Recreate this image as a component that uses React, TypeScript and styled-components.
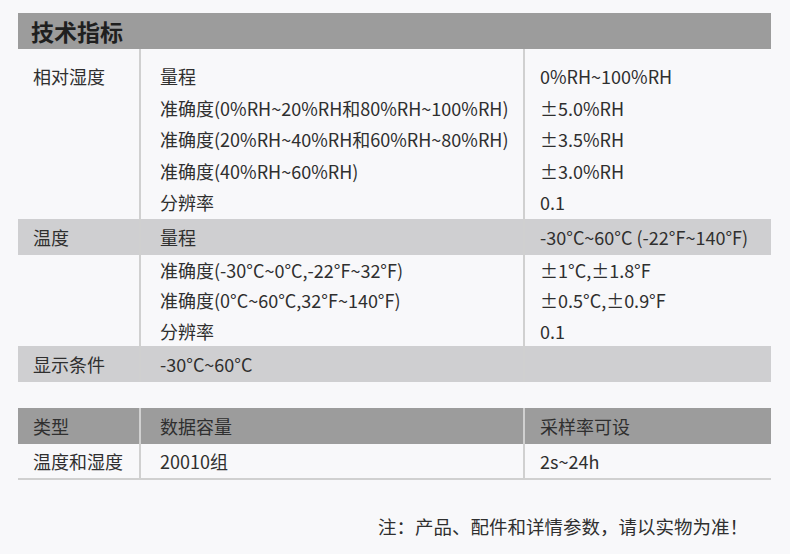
import React from "react";
import styled, { createGlobalStyle } from "styled-components";

const GlobalStyle = createGlobalStyle`
    html, body {
        margin: 0;
        padding: 0;
        background: #f8f8fa;
    }
    body {
        font-family: "Noto Sans CJK SC", "Noto Sans", sans-serif;
        color: #2f2f2f;
    }
`;

const Page = styled.div`
    width: 790px;
    height: 554px;
    box-sizing: border-box;
    padding: 13px 19px 0 18px;
    background: #f8f8fa;
`;

const TitleBar = styled.div`
    height: 36px;
    line-height: 36px;
    background: #9c9c9c;
    padding-left: 13px;
    font-size: 23px;
    font-weight: 700;
    color: #1f1f1f;
`;

const Table = styled.div<{ $gap?: number; $bottomLine?: boolean }>`
    margin-top: ${(p) => p.$gap ?? 0}px;
    border-bottom: ${(p) => (p.$bottomLine ? "2px solid #d0d0d0" : "none")};
`;

const Section = styled.div<{ $shade?: string; $padTop?: number; $line: number }>`
    display: grid;
    grid-template-columns: 121px 384px 1fr;
    background: ${(p) => p.$shade ?? "transparent"};
    font-size: 18px;
    line-height: ${(p) => p.$line}px;

    & > div {
        padding-top: ${(p) => p.$padTop ?? 0}px;
    }
`;

const Col = styled.div<{ $pad: number; $divider?: boolean }>`
    display: flex;
    flex-direction: column;
    padding-left: ${(p) => p.$pad}px;
    border-left: ${(p) => (p.$divider ? "2px solid #d0d0d0" : "none")};
    white-space: nowrap;
`;

const Line = styled.span<{ $h: number }>`
    display: block;
    height: ${(p) => p.$h}px;
`;

const Note = styled.div`
    margin-top: 32px;
    padding-right: 23px;
    text-align: right;
    font-size: 18.5px;
    line-height: 28px;
`;

interface SectionProps {
    label?: string;
    items: string[];
    values: string[];
    line: number;
    shade?: string;
    padTop?: number;
}

function SpecSection({ label, items, values, line, shade, padTop }: SectionProps) {
    return (
        <Section $shade={shade} $padTop={padTop} $line={line}>
            <Col $pad={15}>
                <Line $h={line}>{label}</Line>
            </Col>
            <Col $pad={19} $divider>
                {items.map((t, i) => (
                    <Line key={i} $h={line}>{t}</Line>
                ))}
            </Col>
            <Col $pad={15} $divider>
                {values.map((t, i) => (
                    <Line key={i} $h={line}>{t}</Line>
                ))}
            </Col>
        </Section>
    );
}

export default function App() {
    return (
        <Page>
            <GlobalStyle />
            <TitleBar>技术指标</TitleBar>
            <Table>
                <SpecSection
                    label="相对湿度"
                    line={31.5}
                    padTop={12}
                    items={[
                        "量程",
                        "准确度(0%RH~20%RH和80%RH~100%RH)",
                        "准确度(20%RH~40%RH和60%RH~80%RH)",
                        "准确度(40%RH~60%RH)",
                        "分辨率",
                    ]}
                    values={["0%RH~100%RH", "±5.0%RH", "±3.5%RH", "±3.0%RH", "0.1"]}
                />
                <SpecSection
                    label="温度"
                    line={36}
                    shade="#cfcfd1"
                    items={["量程"]}
                    values={["-30°C~60°C (-22°F~140°F)"]}
                />
                <SpecSection
                    line={30.67}
                    items={["准确度(-30°C~0°C,-22°F~32°F)", "准确度(0°C~60°C,32°F~140°F)", "分辨率"]}
                    values={["±1°C,±1.8°F", "±0.5°C,±0.9°F", "0.1"]}
                />
                <SpecSection
                    label="显示条件"
                    line={36}
                    shade="#cfcfd1"
                    items={["-30°C~60°C"]}
                    values={[""]}
                />
            </Table>
            <Table $gap={26} $bottomLine>
                <SpecSection
                    label="类型"
                    line={36}
                    shade="#9c9c9c"
                    items={["数据容量"]}
                    values={["采样率可设"]}
                />
                <SpecSection label="温度和湿度" line={34} items={["20010组"]} values={["2s~24h"]} />
            </Table>
            <Note>注：产品、配件和详情参数，请以实物为准！</Note>
        </Page>
    );
}
